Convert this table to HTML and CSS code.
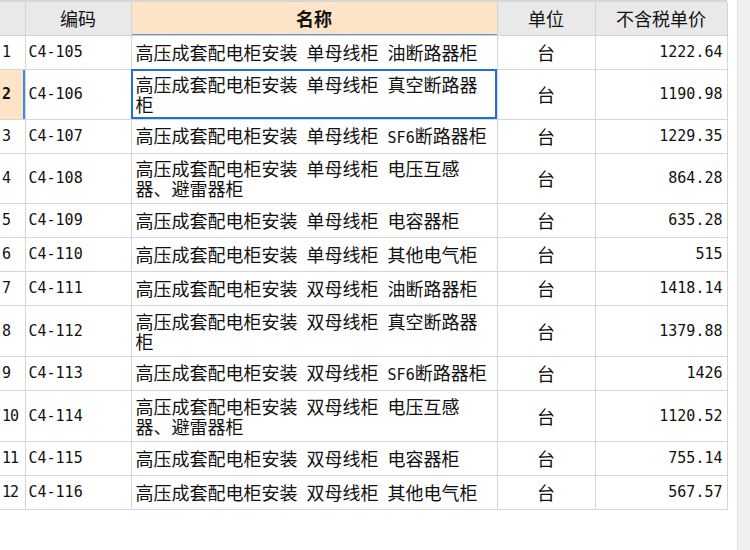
FILE: index.html
```html
<!DOCTYPE html>
<html lang="zh-CN">
<head>
<meta charset="utf-8">
<title>定额</title>
<link rel="stylesheet" href="styles.css">
</head>
<body>
<div class="page">
  <div class="grid-wrap">
    <table class="grid">
      <colgroup>
        <col class="c-rn"><col class="c-code"><col class="c-name"><col class="c-unit"><col class="c-price">
      </colgroup>
      <thead>
        <tr>
          <th class="rn"></th>
          <th>编码</th>
          <th class="active-col">名称</th>
          <th>单位</th>
          <th>不含税单价</th>
        </tr>
      </thead>
      <tbody>
        <tr class="r1"><td class="rn">1</td><td class="code">C4-105</td><td class="name">高压成套配电柜安装 单母线柜 油断路器柜</td><td class="unit">台</td><td class="price">1222.64</td></tr>
        <tr class="r2"><td class="rn sel-rn">2</td><td class="code">C4-106</td><td class="name sel">高压成套配电柜安装 单母线柜 真空断路器柜</td><td class="unit">台</td><td class="price">1190.98</td></tr>
        <tr class="r1"><td class="rn">3</td><td class="code">C4-107</td><td class="name">高压成套配电柜安装 单母线柜 <span class="a">SF6</span>断路器柜</td><td class="unit">台</td><td class="price">1229.35</td></tr>
        <tr class="r2"><td class="rn">4</td><td class="code">C4-108</td><td class="name">高压成套配电柜安装 单母线柜 电压互感器、避雷器柜</td><td class="unit">台</td><td class="price">864.28</td></tr>
        <tr class="r1"><td class="rn">5</td><td class="code">C4-109</td><td class="name">高压成套配电柜安装 单母线柜 电容器柜</td><td class="unit">台</td><td class="price">635.28</td></tr>
        <tr class="r1"><td class="rn">6</td><td class="code">C4-110</td><td class="name">高压成套配电柜安装 单母线柜 其他电气柜</td><td class="unit">台</td><td class="price">515</td></tr>
        <tr class="r1"><td class="rn">7</td><td class="code">C4-111</td><td class="name">高压成套配电柜安装 双母线柜 油断路器柜</td><td class="unit">台</td><td class="price">1418.14</td></tr>
        <tr class="r2b"><td class="rn">8</td><td class="code">C4-112</td><td class="name">高压成套配电柜安装 双母线柜 真空断路器柜</td><td class="unit">台</td><td class="price">1379.88</td></tr>
        <tr class="r1"><td class="rn">9</td><td class="code">C4-113</td><td class="name">高压成套配电柜安装 双母线柜 <span class="a">SF6</span>断路器柜</td><td class="unit">台</td><td class="price">1426</td></tr>
        <tr class="r2b"><td class="rn">10</td><td class="code">C4-114</td><td class="name">高压成套配电柜安装 双母线柜 电压互感器、避雷器柜</td><td class="unit">台</td><td class="price">1120.52</td></tr>
        <tr class="r1"><td class="rn">11</td><td class="code">C4-115</td><td class="name">高压成套配电柜安装 双母线柜 电容器柜</td><td class="unit">台</td><td class="price">755.14</td></tr>
        <tr class="r1"><td class="rn">12</td><td class="code">C4-116</td><td class="name">高压成套配电柜安装 双母线柜 其他电气柜</td><td class="unit">台</td><td class="price">567.57</td></tr>
      </tbody>
    </table>
  </div>
  <div class="scrollbar"></div>
</div>
</body>
</html>
```

FILE: styles.css
```css
* { box-sizing: border-box; }
html, body {
  margin: 0;
  padding: 0;
  background: #ffffff;
}
body {
  font-family: "Noto Sans CJK SC", "Noto Sans", sans-serif;
  color: #111;
}
.page {
  display: flex;
  width: 750px;
  height: 550px;
  overflow: hidden;
}
.grid-wrap {
  flex: 1;
  padding-top: 2px;
  background: linear-gradient(#d6d6d6, #d6d6d6) top left / 727px 2px no-repeat;
}
.scrollbar {
  width: 13px;
  background: #f0f0f0;
  border-left: 1px solid #e2e2e2;
}
.grid {
  border-collapse: collapse;
  table-layout: fixed;
  width: 727px;
  font-size: 18px;
  line-height: 20px;
}
.c-rn { width: 25px; }
.c-code { width: 106px; }
.c-name { width: 366px; }
.c-unit { width: 98px; }
.c-price { width: 132px; }

.grid th, .grid td {
  border: 1px solid #d6d6d6;
  padding: 0;
  vertical-align: middle;
  overflow: hidden;
}
.grid tr > :first-child { border-left: 0; }
.grid thead th {
  height: 33px;
  background: #e9e9e9;
  font-weight: 400;
  text-align: center;
  border-top: 0;
  border-color: #d2d2d2;
}
.grid thead th.active-col {
  background: #fde4c6;
  font-weight: 700;
  box-shadow: inset 0 -1px 0 #5a9be8;
}
.grid tr.r1 td { height: 34px; }
.grid tr.r2 td { height: 50px; }
.grid tr.r2b td { height: 51px; }

.grid td.rn {
  text-align: left;
  padding-left: 2px;
  white-space: nowrap;
  font-family: "DejaVu Sans Mono", "Liberation Mono", monospace;
  font-size: 15px;
  letter-spacing: -1px;
}
.sel-rn {
  background: #fde4c6;
  font-weight: 700;
  box-shadow: inset -2px 0 0 #3d8be6;
}
.code {
  font-family: "DejaVu Sans Mono", "Liberation Mono", monospace;
  font-size: 15px;
  padding-left: 3px !important;
}
.name {
  padding: 0 5px 0 4px !important;
  word-spacing: 5px;
}
.name.sel {
  outline: 2px solid #1f6fd8;
  outline-offset: -2px;
}
.a {
  font-family: "DejaVu Sans Mono", "Liberation Mono", monospace;
  font-size: 15px;
  word-spacing: 0;
}
.unit {
  text-align: center;
}
.price {
  text-align: right;
  padding-right: 4px !important;
  font-family: "DejaVu Sans Mono", "Liberation Mono", monospace;
  font-size: 15px;
}
```
